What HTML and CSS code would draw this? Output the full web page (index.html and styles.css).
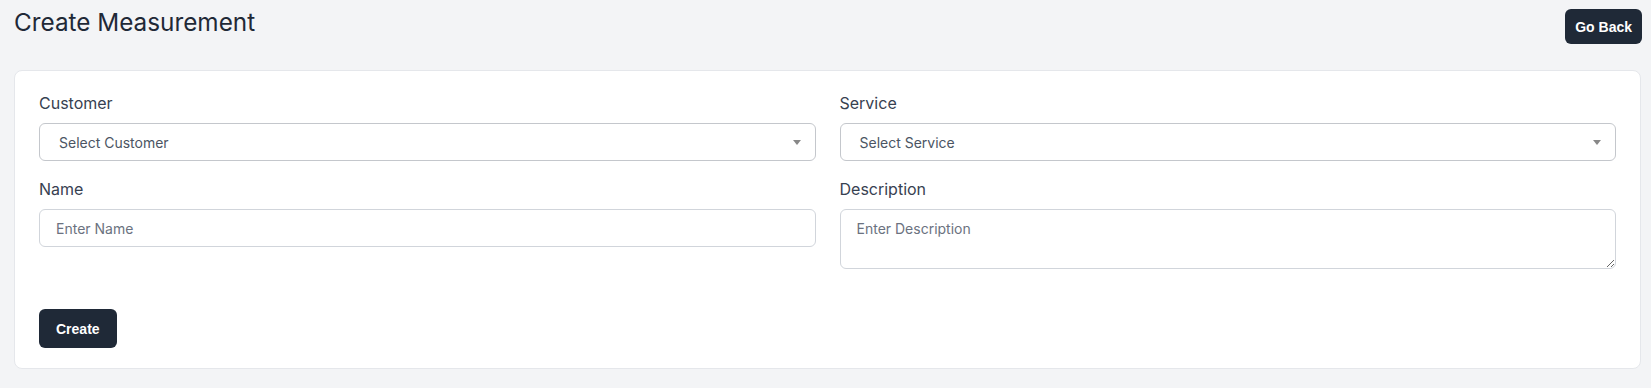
FILE: index.html
```html
<!DOCTYPE html>
<html lang="en">
<head>
<meta charset="utf-8">
<title>Create Measurement</title>
<link rel="stylesheet" href="styles.css">
</head>
<body>
<div class="page">
  <header class="header">
    <h1 class="title">Create Measurement</h1>
    <button class="btn btn-back" type="button">Go Back</button>
  </header>
  <form class="card">
    <div class="grid">
      <div class="field">
        <label class="label">Customer</label>
        <div class="select">
          <span class="select-text">Select Customer</span>
          <span class="select-arrow"></span>
        </div>
      </div>
      <div class="field">
        <label class="label">Service</label>
        <div class="select">
          <span class="select-text">Select Service</span>
          <span class="select-arrow"></span>
        </div>
      </div>
      <div class="field">
        <label class="label" for="name">Name</label>
        <input class="input" id="name" type="text" placeholder="Enter Name">
      </div>
      <div class="field">
        <label class="label" for="desc">Description</label>
        <textarea class="input textarea" id="desc" placeholder="Enter Description"></textarea>
      </div>
    </div>
    <div class="actions">
      <button class="btn btn-create" type="button">Create</button>
    </div>
  </form>
</div>
</body>
</html>
```
FILE: styles.css
```css
* { box-sizing: border-box; }

body {
  margin: 0;
  background: #f3f4f6;
  font-family: Inter, "Noto Sans", sans-serif;
  color: #1f2937;
}

.page {
  padding: 6px 9px 0 14px;
}

.header {
  display: flex;
  justify-content: space-between;
  align-items: flex-start;
}

.title {
  margin: 0;
  font-size: 24.3px;
  line-height: 32px;
  font-weight: 400;
  color: #1f2937;
}

.btn {
  border: none;
  background: #1f2937;
  color: #fff;
  font-family: "Liberation Sans", Arial, sans-serif;
  font-weight: 700;
  font-size: 14px;
  line-height: 16px;
  border-radius: 6px;
  cursor: pointer;
}

.btn-back {
  margin-top: 3px;
  height: 35px;
  padding: 0 10px;
}

.card {
  margin: 26px 1px 0 0;
  background: #fff;
  border: 1px solid #e5e7eb;
  border-radius: 8px;
  padding: 20px 24px;
}

.grid {
  display: grid;
  grid-template-columns: 1fr 1fr;
  column-gap: 24px;
  row-gap: 16px;
}

.field {
  display: flex;
  flex-direction: column;
}

.label {
  font-size: 16px;
  line-height: 24px;
  font-weight: 400;
  color: #374151;
  margin-bottom: 8px;
}

.select {
  height: 38px;
  border: 1px solid #c4c7cc;
  border-radius: 6px;
  display: flex;
  align-items: center;
  justify-content: space-between;
  padding: 0 14px 0 19px;
  background: #fff;
}

.select-text {
  font-size: 14px;
  color: #4b5563;
}

.select-arrow {
  width: 0;
  height: 0;
  border-style: solid;
  border-width: 5px 4px 0 4px;
  border-color: #888 transparent transparent transparent;
}

.input {
  height: 38px;
  border: 1px solid #d1d5db;
  border-radius: 6px;
  padding: 0 16px;
  font-family: Inter, "Noto Sans", sans-serif;
  font-size: 14px;
  color: #374151;
  background: #fff;
  outline: none;
}

.input::placeholder {
  color: #6b7280;
  opacity: 1;
}

.textarea {
  height: 60px;
  padding: 9px 16px;
  line-height: 20px;
  resize: vertical;
}

.actions {
  margin-top: 40px;
}

.btn-create {
  height: 39px;
  padding: 0 17px;
}
```
